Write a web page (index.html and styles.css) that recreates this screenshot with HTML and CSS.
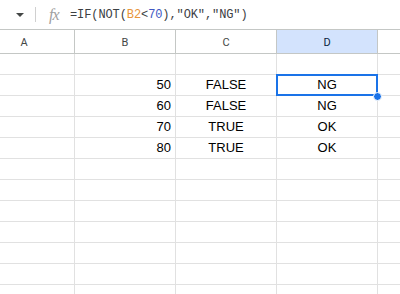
FILE: index.html
```html
<!DOCTYPE html>
<html lang="en">
<head>
  <meta charset="UTF-8">
  <title>NOT function – sheet</title>
  <link rel="stylesheet" href="styles.css">
</head>
<body>

  <!-- Formula bar -->
  <div class="formula-bar">
    <div class="name-box">
      <svg class="caret" width="8" height="4" viewBox="0 0 8 4"><path d="M0 0h8L4 4z" fill="#444746"/></svg>
    </div>
    <div class="fx">fx</div>
    <div class="formula">=IF(NOT(<span class="ref">B2</span>&lt;<span class="num">70</span>),"OK","NG")</div>
  </div>

  <!-- Grid -->
  <div class="sheet">
    <div class="col-head">A</div>
    <div class="col-head">B</div>
    <div class="col-head">C</div>
    <div class="col-head active">D</div>
    <div class="col-head"></div>

    <div class="cell"></div><div class="cell"></div><div class="cell"></div><div class="cell"></div><div class="cell"></div>

    <div class="cell"></div>
    <div class="cell num-cell">50</div>
    <div class="cell center">FALSE</div>
    <div class="cell center selected">NG<span class="handle"></span></div>
    <div class="cell"></div>

    <div class="cell"></div>
    <div class="cell num-cell">60</div>
    <div class="cell center">FALSE</div>
    <div class="cell center">NG</div>
    <div class="cell"></div>

    <div class="cell"></div>
    <div class="cell num-cell">70</div>
    <div class="cell center">TRUE</div>
    <div class="cell center">OK</div>
    <div class="cell"></div>

    <div class="cell"></div>
    <div class="cell num-cell">80</div>
    <div class="cell center">TRUE</div>
    <div class="cell center">OK</div>
    <div class="cell"></div>

    <div class="cell"></div><div class="cell"></div><div class="cell"></div><div class="cell"></div><div class="cell"></div>
    <div class="cell"></div><div class="cell"></div><div class="cell"></div><div class="cell"></div><div class="cell"></div>
    <div class="cell"></div><div class="cell"></div><div class="cell"></div><div class="cell"></div><div class="cell"></div>
    <div class="cell"></div><div class="cell"></div><div class="cell"></div><div class="cell"></div><div class="cell"></div>
    <div class="cell"></div><div class="cell"></div><div class="cell"></div><div class="cell"></div><div class="cell"></div>
    <div class="cell"></div><div class="cell"></div><div class="cell"></div><div class="cell"></div><div class="cell"></div>
    <div class="cell"></div><div class="cell"></div><div class="cell"></div><div class="cell"></div><div class="cell"></div>
  </div>

</body>
</html>
```

FILE: styles.css
```css
body {
  margin: 0;
  background-color: #ffffff;
  font-family: "Liberation Sans", Arial, sans-serif;
  overflow: hidden;
}

.formula-bar {
  display: flex;
  align-items: center;
  height: 29px;
  border-bottom: 1px solid #c4c7c5;
}

.name-box {
  width: 36px;
  height: 15px;
  box-sizing: border-box;
  border-right: 1px solid #d0d0d0;
  display: flex;
  align-items: center;
  padding-left: 16px;
}

.caret {
  display: block;
  margin-top: 1px;
}

.fx {
  width: 34px;
  padding-left: 13px;
  box-sizing: border-box;
  font-family: "Liberation Serif", serif;
  font-style: italic;
  font-size: 16px;
  color: #a0a0a0;
  letter-spacing: -1px;
}

.formula {
  font-family: "Liberation Mono", monospace;
  font-size: 12px;
  color: #3c4043;
  padding-top: 1px;
  letter-spacing: -0.1px;
}

.formula .ref {
  color: #e8953a;
}

.formula .num {
  color: #4257c2;
}

.sheet {
  display: grid;
  grid-template-columns: repeat(5, 101px);
  grid-template-rows: 24px;
  grid-auto-rows: 21px;
  margin-left: -26px;
}

.col-head {
  box-sizing: border-box;
  border-right: 1px solid #c4c7c5;
  border-bottom: 1px solid #c4c7c5;
  font-family: Roboto, sans-serif;
  font-size: 11px;
  color: #444746;
  display: flex;
  align-items: center;
  justify-content: center;
  padding-top: 1px;
}

.col-head.active {
  background-color: #d3e3fd;
  color: #0b1f3f;
}

.cell {
  position: relative;
  box-sizing: border-box;
  border-right: 1px solid #e1e1e1;
  border-bottom: 1px solid #e1e1e1;
  font-size: 13px;
  line-height: 20px;
  color: #000000;
  padding: 0 4px;
  white-space: nowrap;
}

.num-cell {
  text-align: right;
}

.center {
  text-align: center;
}

.selected::after {
  content: "";
  position: absolute;
  left: -1px;
  top: -1px;
  right: -1px;
  bottom: -1px;
  border: 2px solid #1a73e8;
}

.handle {
  position: absolute;
  right: -5px;
  bottom: -6px;
  width: 7px;
  height: 7px;
  border-radius: 50%;
  background-color: #1a73e8;
  border: 1px solid #ffffff;
  z-index: 2;
}
```
